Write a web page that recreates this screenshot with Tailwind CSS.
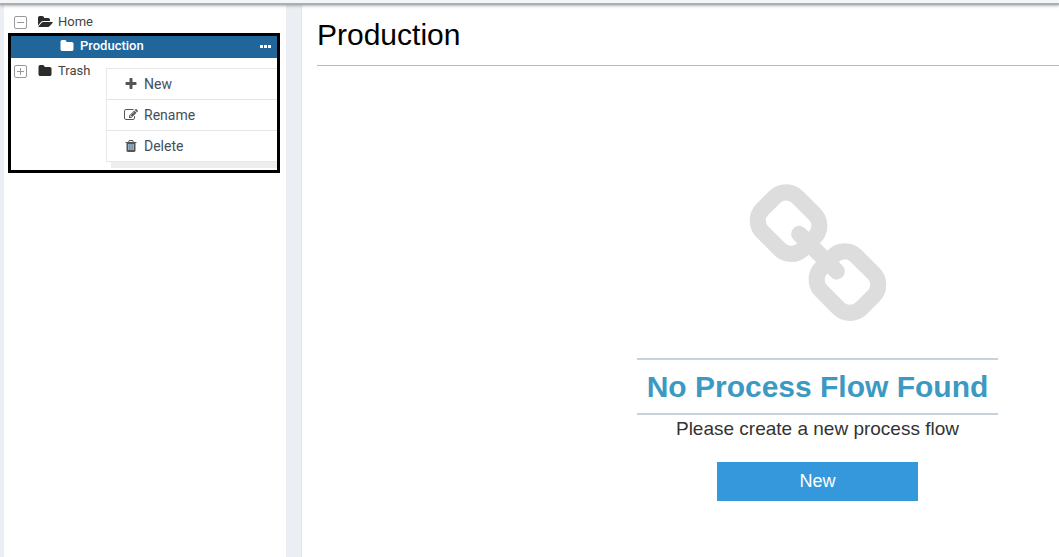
<!DOCTYPE html>
<html lang="en">
<head>
<meta charset="utf-8">
<title>Production</title>
<script src="https://cdn.jsdelivr.net/npm/@tailwindcss/browser@4"></script>
</head>
<body class="flex min-h-screen flex-col overflow-x-hidden bg-[#ebeff3] font-['Liberation_Sans',Arial,sans-serif]">
<header class="relative z-10 h-[5px] border-b-2 border-[#a9afb5] bg-[#f3f5f6] shadow-[0_1px_3px_rgba(0,0,0,0.3)]"></header>
<div class="flex flex-1 pl-1">
  <aside class="relative w-[282px] shrink-0 bg-white pt-[5px] font-[Roboto,sans-serif] text-[13px] text-[#444]">
    <ul>
      <li class="flex h-6 items-center pl-[10px]">
        <button aria-label="Collapse Home" class="mr-[11px]"><svg class="size-[13px]" viewBox="0 0 13 13" fill="none" stroke="#999"><rect x=".5" y=".5" width="12" height="12" rx="1.5"/><path d="M3 6.5h7"/></svg></button>
        <svg class="h-[14px] w-[15px]" viewBox="0 0 1920 1792" fill="#2b2b2b"><path d="M1879 952q0 31-31 66l-336 396q-43 51-120.5 86.5t-143.5 35.5h-1088q-34 0-60.5-13t-26.5-43q0-31 31-66l336-396q43-51 120.5-86.5t143.5-35.5h1088q34 0 60.5 13t26.5 43zm-343-344v160h-832q-94 0-197 47.5t-164 119.5l-337 396-5 6q0-4-.5-12.5t-.5-12.5v-960q0-92 66-158t158-66h320q92 0 158 66t66 158v32h544q92 0 158 66t66 158z"/></svg>
        <a href="#" class="ml-[5px]">Home</a>
      </li>
      <li class="mx-[7px] flex h-6 items-center bg-[#20669b] pr-2 pl-[49px] font-medium text-white">
        <svg class="size-[14px]" viewBox="0 0 1792 1792" fill="currentColor"><path d="M1728 608v704q0 92-66 158t-158 66h-1216q-92 0-158-66t-66-158v-960q0-92 66-158t158-66h320q92 0 158 66t66 158v32h672q92 0 158 66t66 158z"/></svg>
        <a href="#" class="ml-[6px]">Production</a>
        <button aria-label="Production options" class="ml-auto"><svg class="h-[3px] w-[11px]" viewBox="0 0 11 3" fill="currentColor"><path d="M0 0h3v3H0zM4 0h3v3H4zM8 0h3v3H8z"/></svg></button>
      </li>
      <li class="flex h-[26px] items-center pl-[10px]">
        <button aria-label="Expand Trash" class="mr-[11px]"><svg class="size-[13px]" viewBox="0 0 13 13" fill="none" stroke="#999"><rect x=".5" y=".5" width="12" height="12" rx="1.5"/><path d="M3 6.5h7M6.5 3v7"/></svg></button>
        <svg class="size-[14px]" viewBox="0 0 1792 1792" fill="#2b2b2b"><path d="M1728 608v704q0 92-66 158t-158 66h-1216q-92 0-158-66t-66-158v-960q0-92 66-158t158-66h320q92 0 158 66t66 158v32h672q92 0 158 66t66 158z"/></svg>
        <a href="#" class="ml-[6px]">Trash</a>
      </li>
    </ul>
    <!-- Context menu -->
    <div class="absolute top-[63px] left-[102px] w-[172px] border border-[#e8e8e8] bg-white text-sm text-[#444f5a] shadow-[3px_8px_0_-2px_#eee]">
      <button class="flex h-[31px] w-full items-center gap-[6px] border-b border-[#e5e5e5] pl-[17px]"><svg class="size-[14px]" viewBox="0 0 1792 1792" fill="#555"><path d="M1600 736v192q0 40-28 68t-68 28h-416v416q0 40-28 68t-68 28h-192q-40 0-68-28t-28-68v-416h-416q-40 0-68-28t-28-68v-192q0-40 28-68t68-28h416v-416q0-40 28-68t68-28h192q40 0 68 28t28 68v416h416q40 0 68 28t28 68z"/></svg>New</button>
      <button class="flex h-[31px] w-full items-center gap-[6px] border-b border-[#e5e5e5] pl-[17px]"><svg class="size-[14px]" viewBox="0 0 1792 1792" fill="#555"><path d="M888 1184l116-116-152-152-116 116v56h96v96h56zm440-720q-16-16-33 1l-350 350q-17 17-1 33t33-1l350-350q17-17 1-33zm80 594v190q0 119-84.5 203.5t-203.5 84.5h-832q-119 0-203.5-84.5t-84.5-203.5v-832q0-119 84.5-203.5t203.5-84.5h832q63 0 117 25 15 7 18 23 3 17-9 29l-49 49q-14 14-32 8-23-6-45-6h-832q-66 0-113 47t-47 113v832q0 66 47 113t113 47h832q66 0 113-47t47-113v-126q0-13 9-22l64-64q15-15 35-7t20 29zm-96-738l288 288-672 672h-288v-288zm444 132l-92 92-288-288 92-92q28-28 68-28t68 28l152 152q28 28 28 68t-28 68z"/></svg>Rename</button>
      <button class="flex h-[30px] w-full items-center gap-[6px] pl-[17px]"><svg class="size-[14px]" viewBox="0 0 1792 1792"><path fill="#555" d="M672 384h448l-48-117q-7-9-17-11h-317q-10 2-17 11zm928 32v64q0 14-9 23t-23 9h-96v948q0 83-47 143.5t-113 60.5h-832q-66 0-113-58.5t-47-141.5v-952h-96q-14 0-23-9t-9-23v-64q0-14 9-23t23-9h309l70-167q15-37 54-63t79-26h320q40 0 79 26t54 63l70 167h309q14 0 23 9t9 23z"/><path fill="#a9d3f2" d="M544 640h160v768h-160zM816 640h160v768h-160zM1088 640h160v768h-160z"/></svg>Delete</button>
    </div>
    <!-- Highlight frame -->
    <div class="pointer-events-none absolute top-[28px] left-1 h-[140px] w-[272px] border-3 border-black"></div>
  </aside>
  <main class="ml-[15px] min-w-0 flex-1 border-l border-[#e1e5e9] bg-white pl-[15px]">
    <h1 class="border-b border-[#bbb] pt-[10px] pb-[10px] text-[30px] leading-[40px] text-black">Production</h1>
    <section class="flex flex-col items-center pt-[117px] pl-[259px]">
      <svg class="size-[150px]" viewBox="0 0 1792 1792" fill="#ddd"><path d="M1520 1216q0-40-28-68l-208-208q-28-28-68-28-42 0-72 32 3 3 19 18.5t21.5 21.5 15 19 13 25.5 3.5 27.5q0 40-28 68t-68 28q-15 0-27.5-3.5t-25.5-13-19-15-21.5-21.5-18.5-19q-33 31-33 73 0 40 28 68l206 207q27 27 68 27 40 0 68-26l147-146q28-28 28-67zm-703-705q0-40-28-68l-206-207q-28-28-68-28-39 0-68 27l-147 146q-28 28-28 67 0 40 28 68l208 208q27 27 68 27 42 0 72-31-3-3-19-18.5t-21.5-21.5-15-19-13-25.5-3.5-27.5q0-40 28-68t68-28q15 0 27.5 3.5t25.5 13 19 15 21.5 21.5 18.5 19q33-31 33-73zm895 705q0 120-85 203l-147 146q-83 83-203 83-121 0-204-85l-206-207q-83-83-83-203 0-123 88-209l-88-88q-86 88-208 88-120 0-204-84l-208-208q-84-84-84-204t85-203l147-146q83-83 203-83 121 0 204 85l206 207q83 83 83 203 0 123-88 209l88 88q86-88 208-88 120 0 204 84l208 208q84 84 84 204z"/></svg>
      <h2 class="mt-[25px] border-y-2 border-[#c5d3df] px-[10px] text-[30px] leading-[53px] font-bold text-[#3c9ac2]">No Process Flow Found</h2>
      <p class="text-[19px] leading-[28px] text-[#333]">Please create a new process flow</p>
      <button class="mt-[19px] h-[39px] w-[201px] bg-[#3598dc] text-[18px] text-white">New</button>
    </section>
  </main>
</div>
</body>
</html>
